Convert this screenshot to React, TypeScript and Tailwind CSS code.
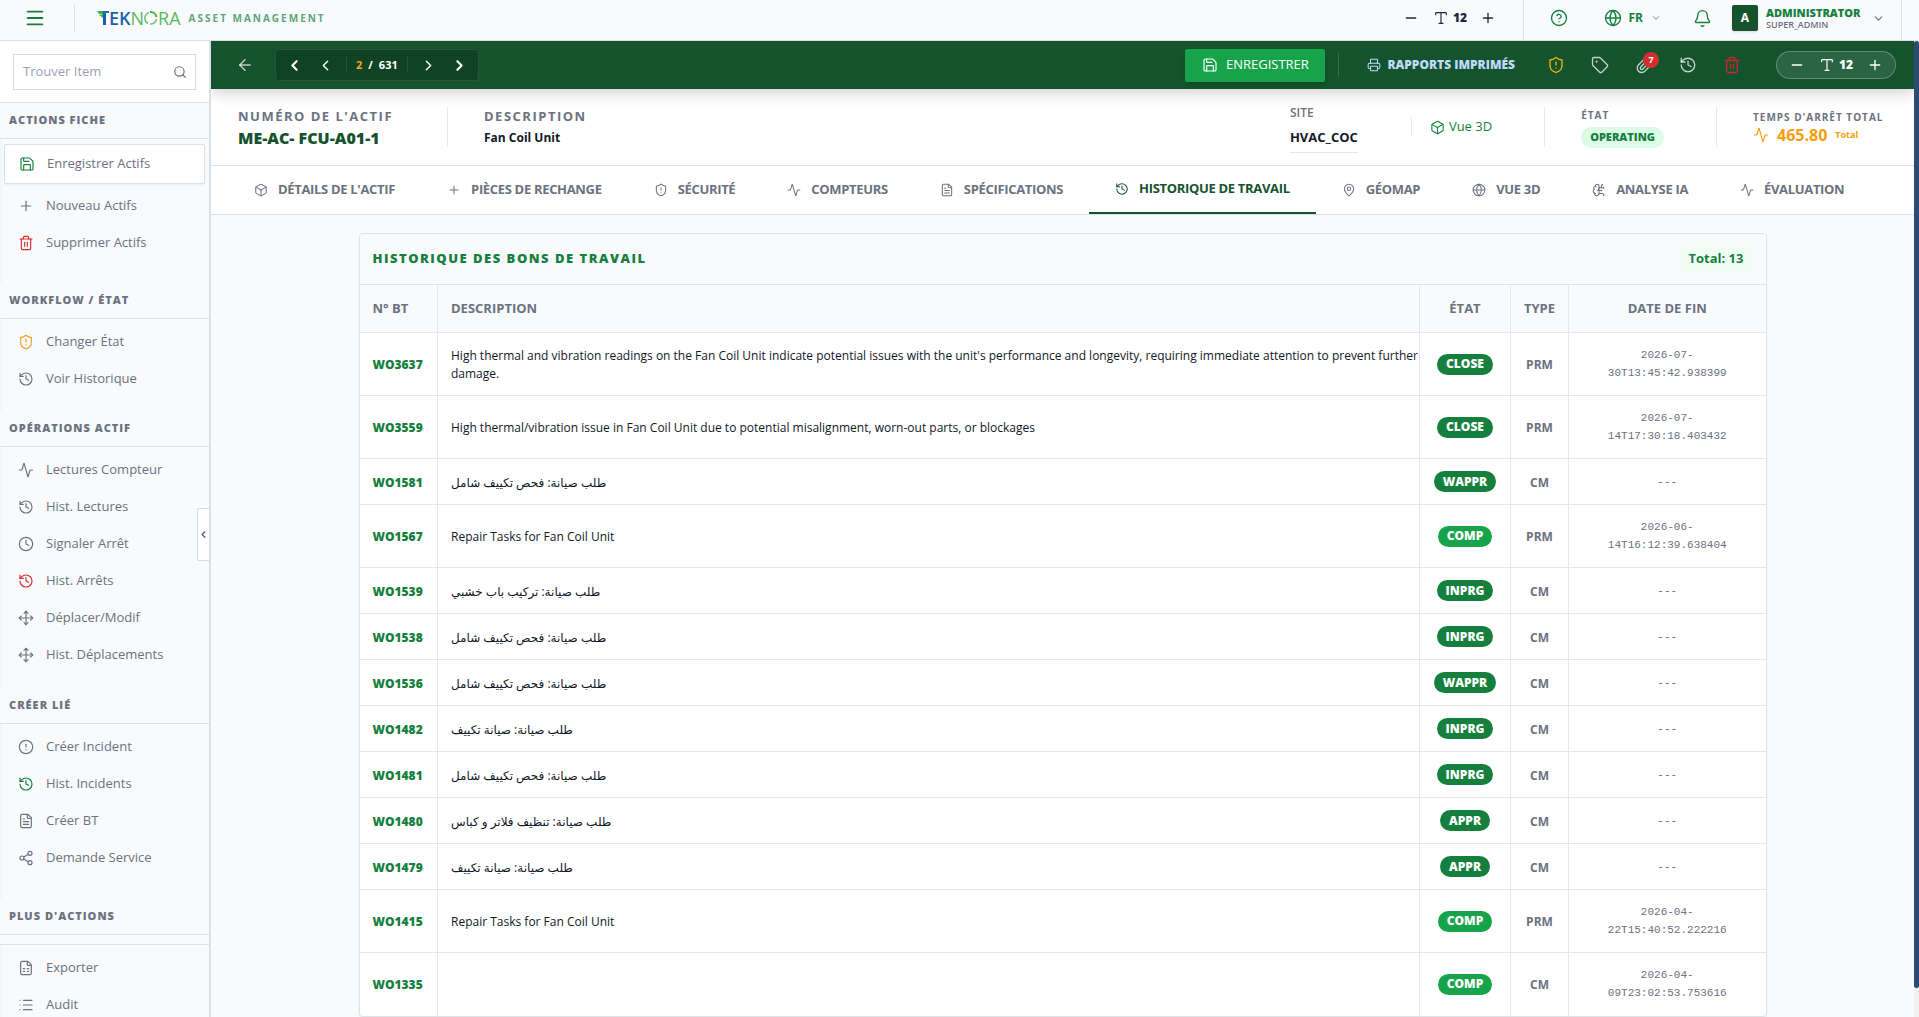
import type { ReactNode } from "react";
import {
  Activity,
  ArrowLeft,
  Bell,
  Box,
  BrainCircuit,
  ChevronDown,
  ChevronLeft,
  ChevronRight,
  CircleAlert,
  CircleQuestionMark,
  Clock,
  FileSpreadsheet,
  FileText,
  Globe,
  History,
  List,
  MapPin,
  Menu,
  Minus,
  Move,
  Paperclip,
  Plus,
  Printer,
  Save,
  Search,
  Share2,
  ShieldAlert,
  Tag,
  Trash2,
  Type,
  type LucideIcon,
} from "lucide-react";

type Action = { label: string; icon: LucideIcon; tone?: string };

const GREEN = "text-[#15803d]";
const RED = "text-[#d32f2f]";
const AMBER = "text-[#f0a020]";

const sections: { title: string; actions: Action[]; spacing: string; split?: boolean }[] = [
  {
    title: "WORKFLOW / ÉTAT",
    spacing: "pb-3.5",
    actions: [
      { label: "Changer État", icon: ShieldAlert, tone: AMBER },
      { label: "Voir Historique", icon: History },
    ],
  },
  {
    title: "OPÉRATIONS ACTIF",
    spacing: "pb-[15px]",
    actions: [
      { label: "Lectures Compteur", icon: Activity },
      { label: "Hist. Lectures", icon: History },
      { label: "Signaler Arrêt", icon: Clock },
      { label: "Hist. Arrêts", icon: History, tone: RED },
      { label: "Déplacer/Modif", icon: Move },
      { label: "Hist. Déplacements", icon: Move },
    ],
  },
  {
    title: "CRÉER LIÉ",
    spacing: "pb-[23px]",
    actions: [
      { label: "Créer Incident", icon: CircleAlert },
      { label: "Hist. Incidents", icon: History, tone: GREEN },
      { label: "Créer BT", icon: FileText },
      { label: "Demande Service", icon: Share2 },
    ],
  },
  {
    title: "PLUS D'ACTIONS",
    spacing: "pb-3",
    split: true,
    actions: [
      { label: "Exporter", icon: FileSpreadsheet },
      { label: "Audit", icon: List },
    ],
  },
];

const tabs: { label: string; icon: LucideIcon; active?: boolean }[] = [
  { label: "DÉTAILS DE L'ACTIF", icon: Box },
  { label: "PIÈCES DE RECHANGE", icon: Plus },
  { label: "SÉCURITÉ", icon: ShieldAlert },
  { label: "COMPTEURS", icon: Activity },
  { label: "SPÉCIFICATIONS", icon: FileText },
  { label: "HISTORIQUE DE TRAVAIL", icon: History, active: true },
  { label: "GÉOMAP", icon: MapPin },
  { label: "VUE 3D", icon: Globe },
  { label: "ANALYSE IA", icon: BrainCircuit },
  { label: "ÉVALUATION", icon: Activity },
];

type Order = { id: string; text: string; state: string; type: string; end?: string };

const orders: Order[] = [
  {
    id: "WO3637",
    text: "High thermal and vibration readings on the Fan Coil Unit indicate potential issues with the unit's performance and longevity, requiring immediate attention to prevent further damage.",
    state: "CLOSE",
    type: "PRM",
    end: "2026-07-30T13:45:42.938399",
  },
  {
    id: "WO3559",
    text: "High thermal/vibration issue in Fan Coil Unit due to potential misalignment, worn-out parts, or blockages",
    state: "CLOSE",
    type: "PRM",
    end: "2026-07-14T17:30:18.403432",
  },
  { id: "WO1581", text: "طلب صيانة: فحص تكييف شامل", state: "WAPPR", type: "CM" },
  { id: "WO1567", text: "Repair Tasks for Fan Coil Unit", state: "COMP", type: "PRM", end: "2026-06-14T16:12:39.638404" },
  { id: "WO1539", text: "طلب صيانة: تركيب باب خشبي", state: "INPRG", type: "CM" },
  { id: "WO1538", text: "طلب صيانة: فحص تكييف شامل", state: "INPRG", type: "CM" },
  { id: "WO1536", text: "طلب صيانة: فحص تكييف شامل", state: "WAPPR", type: "CM" },
  { id: "WO1482", text: "طلب صيانة: صيانة تكييف", state: "INPRG", type: "CM" },
  { id: "WO1481", text: "طلب صيانة: فحص تكييف شامل", state: "INPRG", type: "CM" },
  { id: "WO1480", text: "طلب صيانة: تنظيف فلاتر و كباس", state: "APPR", type: "CM" },
  { id: "WO1479", text: "طلب صيانة: صيانة تكييف", state: "APPR", type: "CM" },
  { id: "WO1415", text: "Repair Tasks for Fan Coil Unit", state: "COMP", type: "PRM", end: "2026-04-22T15:40:52.222216" },
  { id: "WO1335", text: "", state: "COMP", type: "CM", end: "2026-04-09T23:02:53.753616" },
];

function Divider({ className }: { className: string }) {
  return <span className={`w-px shrink-0 ${className}`} />;
}

function Logo() {
  return (
    <span className="flex items-center" role="img" aria-label="TEKNORA">
      <svg width="12" height="14" viewBox="0 0 12 14" aria-hidden="true">
        <path d="M0 0h5l1 3H2z" fill="#3fb54a" />
        <path d="M5 0h7v2H9L8 4H6z" fill="#1d6fb0" />
        <path d="M6 4l3-2v12H6z" fill="#1c5fa8" />
        <path d="M2 4l4-1 0 4z" fill="#3fb54a" />
      </svg>
      <span aria-hidden="true" className="text-lg leading-none font-semibold text-[#1c5fa8]">
        EK
      </span>
      <span aria-hidden="true" className="text-lg leading-none font-normal text-[#5cb85c]">
        N
      </span>
      <svg width="14" height="14" viewBox="0 0 14 14" fill="none" aria-hidden="true">
        <path d="M5 1.500A6 6 0 0 0 4 12.500" stroke="#7cc47c" strokeWidth="1.6" />
        <path d="M6 1a6 6 0 0 1 6.500 5" stroke="#4caf50" strokeWidth="2" />
        <path d="M12.500 8A6 6 0 0 1 6 13" stroke="#7cc47c" strokeWidth="1.6" />
      </svg>
      <span aria-hidden="true" className="text-lg leading-none font-normal text-[#5cb85c]">
        RA
      </span>
    </span>
  );
}

function TextSize({ className }: { className: string }) {
  return (
    <div className={`flex h-7 items-center justify-between px-3 ${className}`}>
      <button type="button" aria-label="Réduire le texte">
        <Minus size={16} />
      </button>
      <span className="flex items-center gap-1 text-xs font-extrabold">
        <Type size={16} strokeWidth={1.75} />
        12
      </span>
      <button type="button" aria-label="Agrandir le texte">
        <Plus size={16} />
      </button>
    </div>
  );
}

function TopBar() {
  return (
    <header className="flex h-[41px] shrink-0 items-center border-b border-[#d9e0e5] bg-[#f8fafb] pb-1">
      <button type="button" aria-label="Menu" className={`ml-6 ${GREEN}`}>
        <Menu size={22} />
      </button>
      <Divider className="ml-7 h-7 bg-[#dce1e6]" />
      <a href="#" className="ml-[22px] flex items-center gap-2">
        <Logo />
        <span className="text-[10px] font-bold tracking-[2px] text-[#5fa57a]">ASSET MANAGEMENT</span>
      </a>
      <TextSize className="ml-auto w-[117px] text-slate-800" />
      <Divider className="-mb-1 ml-[15px] h-10 bg-[#dce1e6]" />
      <button type="button" aria-label="Aide" className={`ml-[26px] ${GREEN}`}>
        <CircleQuestionMark size={18} strokeWidth={1.75} />
      </button>
      <button type="button" className={`ml-9 flex items-center text-xs font-bold ${GREEN}`}>
        <Globe size={18} strokeWidth={1.75} />
        <span className="ml-1.5">FR</span>
        <ChevronDown size={10} className="ml-2 text-gray-500" />
      </button>
      <button type="button" aria-label="Notifications" className={`ml-8 ${GREEN}`}>
        <Bell size={19} strokeWidth={1.75} />
      </button>
      <button type="button" className="ml-5 flex items-center text-left">
        <span className="flex size-[26px] items-center justify-center rounded-xs bg-[#14532d] text-xs font-bold text-white shadow">
          A
        </span>
        <span className="ml-2 flex w-24 flex-col">
          <span className={`text-[11px] leading-3 font-extrabold ${GREEN}`}>ADMINISTRATOR</span>
          <span className="text-[9px] leading-[11px] font-semibold text-gray-500">SUPER_ADMIN</span>
        </span>
        <ChevronDown size={13} className="ml-2.5 text-gray-500" />
      </button>
      <Divider className="mr-[17px] -mb-1 ml-4 h-10 bg-[#dce1e6]" />
    </header>
  );
}

function SideItem({ label, icon: Icon, tone = "text-[#6b7280]" }: Action) {
  return (
    <li>
      <button
        type="button"
        className="flex h-[37px] w-full items-center gap-3 pl-4 text-[13px] font-medium text-[#6b7280]"
      >
        <Icon size={16} strokeWidth={1.75} className={tone} />
        {label}
      </button>
    </li>
  );
}

function SideTitle({ children }: { children: ReactNode }) {
  return (
    <h2 className="flex h-9 shrink-0 items-center border-b border-[#dde2e7] bg-[#f8fafb] pl-[9px] text-[11px] font-extrabold tracking-[1px] text-[#6b7280]">
      {children}
    </h2>
  );
}

function Sidebar() {
  return (
    <aside className="relative flex w-[211px] shrink-0 flex-col border-r-2 border-[#dbe0e5] bg-[#f8fafb]">
      <nav className="flex min-h-0 flex-1 flex-col overflow-hidden">
        <div className="shrink-0 border-b border-[#dde2e7] bg-white px-[13px] pt-[13px] pb-3">
          <label className="flex h-9 items-center border border-[#d5dbe1] bg-white pr-2 pl-[9px] text-[#6b7280]">
            <input
              type="text"
              aria-label="Trouver Item"
              placeholder="Trouver Item"
              className="w-full min-w-0 bg-transparent text-[13px] outline-none placeholder:text-[#9ca3af]"
            />
            <Search size={14} className="shrink-0" />
          </label>
        </div>
        <SideTitle>ACTIONS FICHE</SideTitle>
        <ul className="shrink-0 border-l-2 border-[#f3f5f7] pt-[5px] pb-[22px]">
          <li className="mr-1 mb-[3px] ml-0.5">
            <button
              type="button"
              className="flex h-10 w-full items-center gap-3 rounded-xs border border-[#dde2e7] bg-white pl-3.5 text-[13px] font-medium text-[#6b7280] shadow-xs"
            >
              <Save size={16} strokeWidth={1.75} className={GREEN} />
              Enregistrer Actifs
            </button>
          </li>
          <SideItem label="Nouveau Actifs" icon={Plus} />
          <SideItem label="Supprimer Actifs" icon={Trash2} tone={RED} />
        </ul>
        {sections.map((section) => (
          <section key={section.title} className="shrink-0">
            <SideTitle>{section.title}</SideTitle>
            {section.split && <div className="h-2.5 border-b border-[#dde2e7]" />}
            <ul className={`border-l-2 border-[#f3f5f7] pt-1 ${section.spacing}`}>
              {section.actions.map((action) => (
                <SideItem key={action.label} {...action} />
              ))}
            </ul>
          </section>
        ))}
      </nav>
      <button
        type="button"
        aria-label="Réduire le panneau"
        className="absolute top-[467px] right-0 flex h-[53px] w-3 items-center justify-center rounded-l-xs border border-r-0 border-[#d5dbe1] bg-white text-[#4b5563]"
      >
        <ChevronLeft size={11} strokeWidth={2.5} />
      </button>
    </aside>
  );
}

function Toolbar() {
  return (
    <div className="relative z-10 flex h-12 shrink-0 items-center bg-[#14532d] text-white shadow-[0_4px_14px_rgba(0,0,0,0.18)]">
      <button type="button" aria-label="Retour" className="ml-[25px] text-white/70">
        <ArrowLeft size={18} />
      </button>
      <div className="ml-[21px] flex h-8 items-center rounded border border-white/10 bg-black/20 pl-2.5">
        <button type="button" aria-label="Premier" className="mr-3.5">
          <ChevronLeft size={17} strokeWidth={3} />
        </button>
        <button type="button" aria-label="Précédent" className="mr-3">
          <ChevronLeft size={17} />
        </button>
        <span className="flex h-4 items-center gap-1.5 border-x border-white/10 px-[9px] text-[11px] font-bold">
          <span className="text-[#f5a623]">2</span>
          <span>/</span>
          <span>631</span>
        </span>
        <button type="button" aria-label="Suivant" className="ml-3">
          <ChevronRight size={17} />
        </button>
        <button type="button" aria-label="Dernier" className="mr-2.5 ml-3.5">
          <ChevronRight size={17} strokeWidth={3} />
        </button>
      </div>
      <button
        type="button"
        className="ml-auto flex h-[33px] w-[140px] items-center justify-center gap-2 rounded-xs bg-[#16a34a] text-[13px] shadow-md"
      >
        <Save size={16} strokeWidth={1.75} />
        ENREGISTRER
      </button>
      <Divider className="ml-[13px] h-6 bg-white/15" />
      <button
        type="button"
        className="ml-7 flex items-center gap-1.5 text-xs font-extrabold text-[#bfdbfe]"
      >
        <Printer size={14} strokeWidth={1.75} />
        RAPPORTS IMPRIMÉS
      </button>
      <button type="button" aria-label="Changer l'état" className="ml-8 text-[#eab308]">
        <ShieldAlert size={18} strokeWidth={1.75} />
      </button>
      <button type="button" aria-label="Étiquettes" className="ml-[26px] text-white/75">
        <Tag size={18} strokeWidth={1.75} />
      </button>
      <button type="button" aria-label="Pièces jointes" className="relative ml-[26px] text-white/75">
        <Paperclip size={18} strokeWidth={1.75} />
        <span className="absolute -top-1 -right-1.5 flex size-4 items-center justify-center rounded-full bg-[#d32f2f] text-[9px] font-bold text-white">
          7
        </span>
      </button>
      <button type="button" aria-label="Historique" className="ml-[26px] text-white/75">
        <History size={18} strokeWidth={1.75} />
      </button>
      <button type="button" aria-label="Supprimer" className="ml-[26px] text-[#c62828]">
        <Trash2 size={18} strokeWidth={1.75} />
      </button>
      <TextSize className="mr-[18px] ml-[35px] w-[120px] rounded-full border border-white/25 bg-white/10 text-white" />
    </div>
  );
}

function AssetSummary() {
  return (
    <div className="flex h-[77px] shrink-0 items-center border-b border-[#dde2e7] bg-white px-[27px] shadow-sm">
      <div className="flex w-[209px] flex-col gap-0.5">
        <span className="text-[13px] leading-5 font-bold tracking-[1.500px] text-[#6b7280]">NUMÉRO DE L'ACTIF</span>
        <span className="text-base leading-5 font-extrabold text-[#14532d]">ME-AC- FCU-A01-1</span>
      </div>
      <Divider className="h-10 bg-[#e5e7eb]" />
      <div className="ml-9 flex flex-col gap-0.5">
        <span className="text-[13px] leading-5 font-bold tracking-[1.500px] text-[#6b7280]">DESCRIPTION</span>
        <span className="text-xs leading-5 font-bold text-[#111827]">Fan Coil Unit</span>
      </div>
      <div className="mt-1 ml-auto flex flex-col">
        <label htmlFor="site" className="text-xs leading-4 font-semibold text-[#6b7280]">
          SITE
        </label>
        <input
          id="site"
          type="text"
          readOnly
          value="HVAC_COC"
          className="h-8 w-[68px] border-b border-[#e5e7eb] text-[13px] font-bold text-[#111827] outline-none"
        />
      </div>
      <Divider className="ml-[53px] h-5 bg-[#e5e7eb]" />
      <button type="button" className={`ml-[18px] flex items-center gap-1 text-[13px] ${GREEN}`}>
        <Box size={15} strokeWidth={1.75} />
        Vue 3D
      </button>
      <Divider className="ml-[52px] h-10 bg-[#e5e7eb]" />
      <div className="ml-9 flex flex-col items-start gap-1">
        <span className="text-[10px] leading-4 font-bold tracking-[1px] text-[#6b7280]">ÉTAT</span>
        <span className="flex h-[21px] items-center rounded-full bg-[#dcfce7] px-[9px] text-[11px] font-extrabold text-[#15803d]">
          OPERATING
        </span>
      </div>
      <Divider className="ml-[52px] h-10 bg-[#e5e7eb]" />
      <div className="ml-9 flex w-[134px] flex-col">
        <span className="text-[10px] leading-4 font-bold tracking-[1px] whitespace-nowrap text-[#6b7280]">
          TEMPS D'ARRÊT TOTAL
        </span>
        <span className="flex items-center text-[#f59e0b]">
          <Activity size={16} strokeWidth={1.75} />
          <span className="ml-2 text-base leading-5 font-bold">465.80</span>
          <span className="ml-2 text-[9px] font-bold">Total</span>
        </span>
      </div>
    </div>
  );
}

function Tabs() {
  return (
    <div role="tablist" className="flex h-[49px] shrink-0 border-b border-[#dde2e7] bg-white pl-[17px]">
      {tabs.map(({ label, icon: Icon, active }) => (
        <button
          key={label}
          type="button"
          role="tab"
          aria-selected={!!active}
          className={`flex items-center gap-2.5 px-[26px] text-[13px] font-bold tracking-tight whitespace-nowrap ${
            active ? "border-b-2 border-[#14532d] text-[#14532d]" : "text-[#6b7280]"
          }`}
        >
          <Icon size={14} strokeWidth={1.75} />
          {label}
        </button>
      ))}
    </div>
  );
}

function OrderRow({ order }: { order: Order }) {
  return (
    <tr className={`border-t border-[#e5e7eb] ${order.end ? "h-[63px]" : "h-[46px]"}`}>
      <td className="pt-0.5 pl-[13px] text-xs font-extrabold">
        <a href="#" className={GREEN}>
          {order.id}
        </a>
      </td>
      <td className="border-l border-[#e5e7eb] pt-0.5 pl-[13px] text-xs leading-[18px] text-[#111827]">
        {order.text}
      </td>
      <td className="border-l border-[#e5e7eb]">
        <div className="flex justify-center">
          <span
            className={`flex h-[21px] items-center rounded-full px-[9px] text-xs font-extrabold text-white ${
              order.state === "COMP" ? "bg-[#16a34a]" : "bg-[#15803d]"
            }`}
          >
            {order.state}
          </span>
        </div>
      </td>
      <td className="border-l border-[#e5e7eb] pt-0.5 text-center text-xs font-bold text-[#6b7280]">{order.type}</td>
      <td className="border-l border-[#e5e7eb] px-[13px] text-center font-['Liberation_Mono',monospace] text-[11px] leading-[18px] text-[#6b7280]">
        {order.end ? (
          <>
            {order.end.slice(0, 8)}
            <wbr />
            {order.end.slice(8)}
          </>
        ) : (
          "---"
        )}
      </td>
    </tr>
  );
}

function WorkOrders() {
  return (
    <section className="mx-auto mt-[18px] w-full max-w-[1408px] overflow-hidden rounded border border-[#dfe3e7] bg-white shadow-xs">
      <div className="flex h-[50px] items-center justify-between bg-[#f8fafb] pr-3.5 pl-[13px]">
        <h1 className={`text-[13px] font-extrabold tracking-[1.500px] ${GREEN}`}>HISTORIQUE DES BONS DE TRAVAIL</h1>
        <span className={`rounded-xs bg-[#f0fdf4] px-2 py-0.5 text-[13px] font-bold ${GREEN}`}>Total: 13</span>
      </div>
      <table className="w-full table-fixed border-collapse">
        <colgroup>
          <col className="w-[78px]" />
          <col />
          <col className="w-[91px]" />
          <col className="w-[58px]" />
          <col className="w-[197px]" />
        </colgroup>
        <thead>
          <tr className="h-12 border-t border-[#dfe3e7] bg-[#f8fafb] text-[13px] text-[#6b7280]">
            <th className="pl-[13px] text-left font-bold">N° BT</th>
            <th className="border-l border-[#e5e7eb] px-[13px] text-left font-bold">DESCRIPTION</th>
            <th className="border-l border-[#e5e7eb] font-bold">ÉTAT</th>
            <th className="border-l border-[#e5e7eb] font-bold">TYPE</th>
            <th className="border-l border-[#e5e7eb] font-bold">DATE DE FIN</th>
          </tr>
        </thead>
        <tbody>
          {orders.map((order) => (
            <OrderRow key={order.id} order={order} />
          ))}
        </tbody>
      </table>
    </section>
  );
}

export default function App() {
  return (
    <div className="flex h-screen flex-col overflow-hidden bg-[#f8fafb] font-['Open_Sans','Noto_Sans','DejaVu_Sans',sans-serif]">
      <TopBar />
      <div className="flex min-h-0 flex-1">
        <Sidebar />
        <main className="flex min-w-0 flex-1 flex-col overflow-hidden">
          <Toolbar />
          <AssetSummary />
          <Tabs />
          <WorkOrders />
        </main>
        <div className="flex w-[5px] shrink-0 flex-col bg-[#f1f1f1]">
          <div className="h-[97%] rounded-sm bg-[#2c4a75]" />
        </div>
      </div>
    </div>
  );
}
